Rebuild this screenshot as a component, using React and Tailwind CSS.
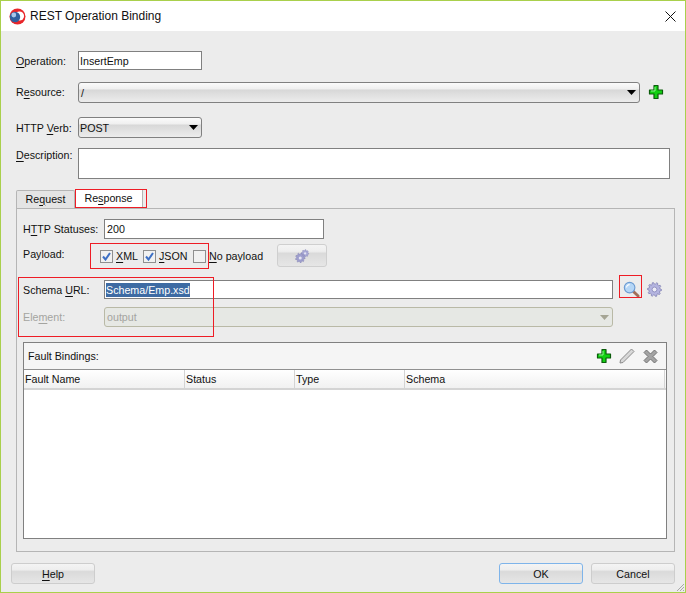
import React from 'react';

const btnBg = 'bg-[linear-gradient(180deg,#f4f4f4_0%,#eeeeee_30%,#dadada_40%,#e6e6e6_100%)]';
const comboBg = 'bg-[linear-gradient(180deg,#fbfbfb_0%,#f0f0f0_30%,#d8d8d8_38%,#ececec_100%)]';

// one underlined letter, like a windows mnemonic
const U = ({ children }) => <span className="underline underline-offset-2 decoration-1">{children}</span>;

const Arrow = ({ color = '#000000' }) => (
  <svg width="9" height="5" viewBox="0 0 9 5">
    <path d="M0 0H9L4.5 5Z" fill={color} />
  </svg>
);

const Plus = () => (
  <svg width="16" height="16" viewBox="0 0 16 16">
    <path d="M6 1.5H10V6H14.5V10H10V14.5H6V10H1.5V6H6Z" fill="#12d012" stroke="#0b5c0b" strokeWidth="1.2" strokeLinejoin="round" />
    <path d="M7 3V7H3" fill="none" stroke="#8df58d" strokeWidth="1" />
  </svg>
);

const gearPoints = (cx, cy, outer, inner, teeth) => {
  const pts = [];
  for (let i = 0; i < teeth * 4; i++) {
    const a = (i / (teeth * 4)) * Math.PI * 2;
    const r = i % 4 < 2 ? outer : inner;
    pts.push(`${(cx + r * Math.cos(a)).toFixed(2)},${(cy + r * Math.sin(a)).toFixed(2)}`);
  }
  return pts.join(' ');
};

const Gear = () => (
  <svg width="15" height="15" viewBox="0 0 16 16">
    <polygon points={gearPoints(8, 8, 7.5, 5.8, 10)} fill="#b4b4e0" stroke="#7d7db0" strokeWidth="0.8" />
    <circle cx="8" cy="8" r="2.6" fill="#ececf6" stroke="#8080b4" strokeWidth="0.8" />
  </svg>
);

const Gears = () => (
  <svg width="15" height="14" viewBox="0 0 20 18">
    <polygon points={gearPoints(13.5, 5.5, 5, 3.7, 8)} fill="#a9a9d6" stroke="#8484b8" strokeWidth="0.6" />
    <circle cx="13.5" cy="5.5" r="1.5" fill="#e4e4f2" />
    <polygon points={gearPoints(7, 11.5, 6.5, 4.8, 9)} fill="#9f9fce" stroke="#7a7aae" strokeWidth="0.6" />
    <circle cx="7" cy="11.5" r="2" fill="#e4e4f2" />
  </svg>
);

const Search = () => (
  <svg width="17" height="17" viewBox="0 0 18 18">
    <path d="M10.5 10.5L16 16" stroke="#a06f58" strokeWidth="3" strokeLinecap="round" />
    <circle cx="7" cy="7" r="5.6" fill="#b5d6f6" stroke="#6c9bd2" strokeWidth="1.2" />
    <path d="M3.8 7A3.2 3.2 0 0 1 7 3.8" fill="none" stroke="#ffffff" strokeWidth="1.2" />
  </svg>
);

const Pencil = () => (
  <svg width="16" height="16" viewBox="0 0 16 16">
    <path d="M12.5 1L15 3.5L4 14.5L1 15L1.5 12Z" fill="#d8d8d8" stroke="#8b8b8b" strokeWidth="1" strokeLinejoin="round" />
  </svg>
);

const Cross = () => (
  <svg width="15" height="15" viewBox="0 0 15 15">
    <path d="M3.5 1L7.5 5L11.5 1L14 3.5L10 7.5L14 11.5L11.5 14L7.5 10L3.5 14L1 11.5L5 7.5L1 3.5Z" fill="#a3a3a3" stroke="#737373" strokeWidth="1" strokeLinejoin="round" />
  </svg>
);

const Logo = () => (
  <svg width="17" height="17" viewBox="0 0 17 17">
    <circle cx="8.5" cy="8.5" r="8" fill="#e8262a" />
    <circle cx="10.5" cy="8" r="4.6" fill="#ffffff" />
    <circle cx="6" cy="9" r="5.2" fill="#2f5f9e" />
    <circle cx="4.8" cy="7" r="2.4" fill="#a8c6ea" />
  </svg>
);

const Check = ({ checked }) => (
  <span className="w-[13px] h-[13px] border border-[#8f8f8f] bg-[#f1f1f1] flex items-center justify-center shrink-0">
    {checked && (
      <svg width="9" height="9" viewBox="0 0 9 9">
        <path d="M1 4.5L3.5 7.5L8 1" fill="none" stroke="#3d6fc4" strokeWidth="2" />
      </svg>
    )}
  </span>
);

const Button = ({ children, className = '' }) => (
  <div className={`w-[84px] h-[21px] border rounded-[3px] flex items-center justify-center ${btnBg} ${className}`}>
    {children}
  </div>
);

const Annotation = ({ className }) => (
  <div className={`absolute border border-[#ee1c25] ${className}`} />
);

export default function App() {
  return (
    <div className="relative w-[686px] h-[593px] border border-[#a9d04c] bg-[#ececec] text-[10.7px] leading-[14px] text-[#111111] overflow-hidden font-['Liberation_Sans',sans-serif]">
      {/* title bar */}
      <div className="h-[30px] bg-white flex items-center pl-[8px] pr-[9px] text-[12px]">
        <Logo />
        <span className="ml-[4px]">REST Operation Binding</span>
        <svg className="ml-auto" width="11" height="11" viewBox="0 0 11 11">
          <path d="M0.5 0.5L10.5 10.5M10.5 0.5L0.5 10.5" stroke="#111111" strokeWidth="1" />
        </svg>
      </div>

      <div className="pl-[15px] pr-[10px]">
        <div className="mt-[20px] flex items-center">
          <div className="w-[62px]"><U>O</U>peration:</div>
          <div className="w-[124px] h-[19px] border border-[#808080] bg-white px-[1px] flex items-center">InsertEmp</div>
        </div>

        <div className="mt-[12px] flex items-center">
          <div className="w-[62px] -mt-[2px]">R<U>e</U>source:</div>
          <div className={`w-[562px] h-[21px] border border-[#808080] rounded-[3px] pl-[2px] pr-[3px] flex items-center justify-between ${comboBg}`}>
            <span>/</span>
            <Arrow />
          </div>
          <div className="ml-[8px] -mt-[2px]"><Plus /></div>
        </div>

        <div className="mt-[14px] flex items-center">
          <div className="w-[62px]">HTTP <U>V</U>erb:</div>
          <div className={`w-[124px] h-[21px] border border-[#808080] rounded-[3px] pl-[1px] pr-[3px] flex items-center justify-between ${comboBg}`}>
            <span>POST</span>
            <Arrow />
          </div>
        </div>

        <div className="mt-[10px] flex items-start">
          <div className="w-[62px]"><U>D</U>escription:</div>
          <div className="w-[592px] h-[31px] border border-[#808080] bg-white" />
        </div>

        {/* tabs */}
        <div className="mt-[10px] h-[19px] flex items-end">
          <div className="w-[59px] h-[18px] border border-b-0 border-[#b5b5b5] bg-[#e4e4e4] flex items-center justify-center rounded-t-[2px] pb-[2px]">
            Re<U>q</U>uest
          </div>
          <div className="w-[68px] h-[19px] border-r border-t border-[#b5b5b5] bg-white flex items-center justify-center pb-[2px]">
            Re<U>s</U>ponse
          </div>
        </div>

        <div className="w-[659px] h-[344px] border border-[#b5b5b5] pl-[6px] pr-[7px] pt-[10px]">
          <div className="flex items-center">
            <div className="w-[81px]">H<U>T</U>TP Statuses:</div>
            <div className="w-[220px] h-[20px] border border-[#808080] bg-white px-[2px] flex items-center">200</div>
          </div>

          <div className="mt-[5px] h-[24px] flex items-center">
            <div className="w-[77px] -mt-[5px]">Payload:</div>
            <div className="w-[43px] flex items-center mt-[1px]">
              <Check checked />
              <span className="ml-[3px] -mt-[1px]"><U>X</U>ML</span>
            </div>
            <div className="w-[50px] flex items-center mt-[1px]">
              <Check checked />
              <span className="ml-[3px] -mt-[1px]"><U>J</U>SON</span>
            </div>
            <div className="w-[84px] flex items-center mt-[1px]">
              <Check />
              <span className="ml-[3px] -mt-[1px]"><U>N</U>o payload</span>
            </div>
            <div className={`w-[50px] h-[23px] border border-[#cfcfcf] rounded-[3px] flex items-center justify-center -mt-[1px] ${btnBg}`}>
              <Gears />
            </div>
          </div>

          <div className="mt-[12px] flex items-center">
            <div className="w-[81px]">Schema <U>U</U>RL:</div>
            <div className="w-[509px] h-[19px] border border-[#808080] bg-white px-[1px] flex items-center">
              <span className="bg-[#3e6ba3] text-white">Schema/Emp.xsd</span>
            </div>
            <div className="ml-[10px]"><Search /></div>
            <div className="ml-[7px]"><Gear /></div>
          </div>

          <div className="mt-[8px] flex items-center text-[#a4a4a0]">
            <div className="w-[81px]">Ele<U>m</U>ent:</div>
            <div className="w-[509px] h-[20px] border border-[#b9b9a6] rounded-[3px] bg-[#e6e8e4] pl-[2px] pr-[3px] flex items-center justify-between">
              <span>output</span>
              <Arrow color="#a5a594" />
            </div>
          </div>

          {/* fault bindings table */}
          <div className="mt-[15px] w-[644px] h-[197px] border border-[#808080] bg-white flex flex-col">
            <div className="h-[26px] bg-[#f5f5f5] flex items-center pl-[4px] pr-[8px]">
              <span>Fault Bindings:</span>
              <div className="ml-auto flex items-center">
                <Plus />
                <div className="ml-[7px]"><Pencil /></div>
                <div className="ml-[8px]"><Cross /></div>
              </div>
            </div>
            <div className="h-[21px] border-t border-[#909090] border-b-2 border-b-[#d4d4d4] flex bg-[linear-gradient(180deg,#ffffff,#f1f1f1)]">
              <div className="w-[161px] border-r border-[#d4d4d4] pl-[1px] flex items-center">Fault Name</div>
              <div className="w-[110px] border-r border-[#d4d4d4] pl-[1px] flex items-center">Status</div>
              <div className="w-[110px] border-r border-[#d4d4d4] pl-[1px] flex items-center">Type</div>
              <div className="w-[260px] border-r border-[#d4d4d4] pl-[1px] flex items-center">Schema</div>
            </div>
          </div>
        </div>

        {/* footer buttons */}
        <div className="mt-[11px] -ml-[5px] flex">
          <Button className="border-[#cdcdcd]"><span><U>H</U>elp</span></Button>
          <Button className="ml-auto border-[#7eb4ea]">OK</Button>
          <Button className="ml-[8px] border-[#cdcdcd]">Cancel</Button>
        </div>
      </div>

      {/* resize grip */}
      <svg className="absolute right-0 bottom-0" width="10" height="10" viewBox="0 0 10 10">
        <path d="M9 2L2 9M9 5L5 9M9 8L8 9" stroke="#a8a8a8" strokeWidth="1" />
      </svg>

      {/* red review marks drawn over the dialog */}
      <Annotation className="left-[74px] top-[188px] w-[72px] h-[19px]" />
      <Annotation className="left-[89px] top-[242px] w-[119px] h-[26px]" />
      <Annotation className="left-[17px] top-[276px] w-[196px] h-[60px]" />
      <Annotation className="left-[618px] top-[274px] w-[23px] h-[23px]" />
    </div>
  );
}
